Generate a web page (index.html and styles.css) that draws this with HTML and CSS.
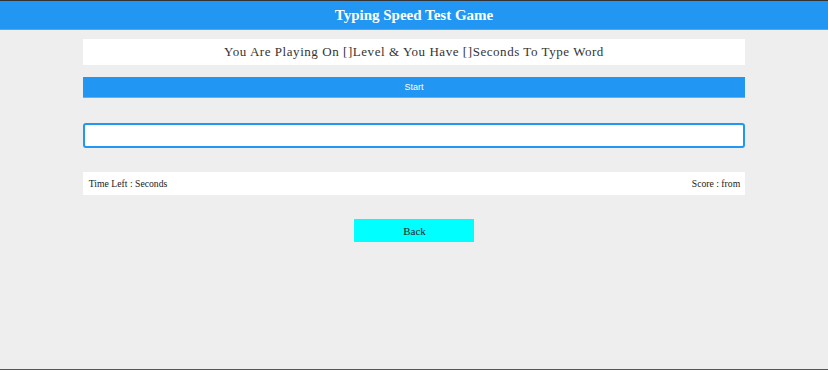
FILE: index.html
```html
<!DOCTYPE html>
<html lang="en">
<head>
    <meta charset="UTF-8">
    <meta name="viewport" content="width=device-width, initial-scale=1.0">
    <title>Typing Speed Test Game</title>
    <link rel="stylesheet" href="styles.css">
</head>
<body>
    <div class="name">Typing Speed Test Game</div>

    <div class="game">
        <div class="message">
            You Are Playing On <span class="lvl">[]</span>Level &amp; You Have <span class="seconds">[]</span>Seconds To Type Word
        </div>
        <button class="start">Start</button>
        <div class="the-word"></div>
        <input type="text" class="input">
        <div class="upcoming-words"></div>
        <div class="control">
            <div class="time">Time Left : <span></span> Seconds</div>
            <div class="score">Score : <span class="got"></span> from <span class="total"></span></div>
        </div>
        <div class="finish"></div>
        <button class="back">Back</button>
    </div>

    <div class="scroll-line"></div>
</body>
</html>
```

FILE: styles.css
```css
* {
    box-sizing: border-box;
}

body {
    margin: 0;
    background: #eee;
    font-family: "Liberation Serif", "Times New Roman", serif;
    border-top: 1px solid #333;
    height: 370px;
    overflow: hidden;
}

.name {
    background: #2196f3;
    color: white;
    text-align: center;
    font-weight: bold;
    font-size: 15px;
    height: 29px;
    line-height: 28px;
    border-bottom: 1px solid #4aa8f5;
}

.game {
    width: 80%;
    margin: 9px auto 0;
    display: flex;
    flex-direction: column;
}

.message {
    background: white;
    color: #333;
    text-align: center;
    font-size: 13px;
    letter-spacing: 0.55px;
    height: 26px;
    line-height: 26px;
}

.start {
    margin-top: 12px;
    height: 21px;
    background: #2196f3;
    color: white;
    border: none;
    border-bottom: 1px solid #5db2f7;
    font-family: "Liberation Sans", Arial, sans-serif;
    font-size: 9px;
    padding: 0;
}

.the-word {
    height: 25px;
}

.input {
    height: 25px;
    border: 2px solid #2196f3;
    border-radius: 3px;
    outline: none;
    background: white;
}

.control {
    margin-top: 24px;
    display: flex;
    justify-content: space-between;
    background: white;
    padding: 0 5px 0 6px;
    height: 23px;
    line-height: 23px;
    font-size: 9.7px;
    color: #222;
}

.back {
    align-self: center;
    margin-top: 24px;
    width: 121px;
    height: 23px;
    background: cyan;
    border: none;
    border-left: 1px solid #f4f4f4;
    font-family: "Liberation Serif", "Times New Roman", serif;
    font-size: 11px;
    color: #222;
    padding: 0;
}

.scroll-line {
    position: fixed;
    left: 0;
    right: 0;
    bottom: 0;
    height: 1px;
    background: #555;
}
```
